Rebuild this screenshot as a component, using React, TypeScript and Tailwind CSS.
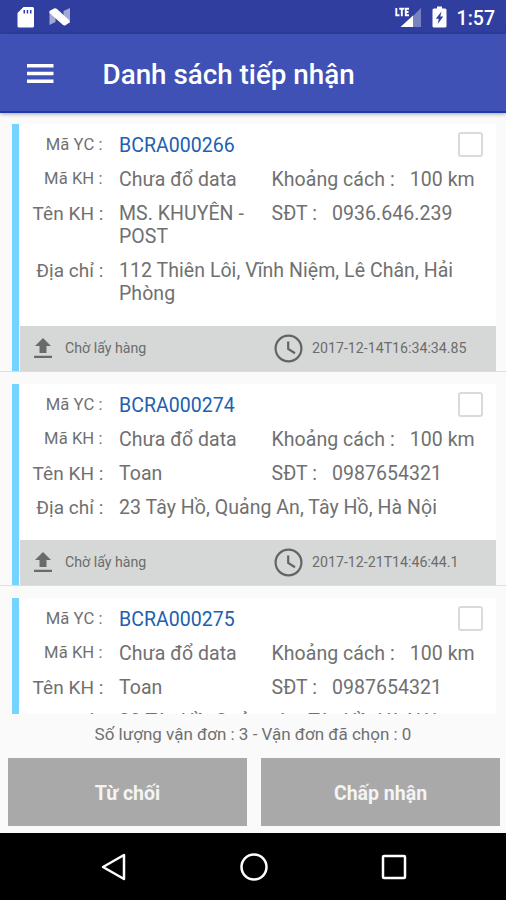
import type { ReactNode } from "react";

const orders = [
  {
    id: "BCRA000266",
    name: "MS. KHUYÊN - POST",
    phone: "0936.646.239",
    address: "112 Thiên Lôi, Vĩnh Niệm, Lê Chân, Hải Phòng",
    time: "2017-12-14T16:34:34.85",
  },
  {
    id: "BCRA000274",
    name: "Toan",
    phone: "0987654321",
    address: "23 Tây Hồ, Quảng An, Tây Hồ, Hà Nội",
    time: "2017-12-21T14:46:44.1",
  },
  {
    id: "BCRA000275",
    name: "Toan",
    phone: "0987654321",
    address: "23 Tây Hồ, Quảng An, Tây Hồ, Hà Nội",
    time: "2017-12-21T14:47:10.2",
  },
];

type Order = (typeof orders)[number];

function StatusBar() {
  return (
    <div className="flex h-[34px] shrink-0 items-center bg-[#303f9f] pr-[11px] pl-[17px] text-white">
      <svg width="18" height="21" viewBox="0 0 18 21">
        <path
          fillRule="evenodd"
          fill="currentColor"
          d="M6.5 0H15.5Q17 0 17 1.5V19Q17 20.5 15.5 20.5H2Q.5 20.5 .5 19V6ZM6.5 3V6.5H8V3ZM9.7 3V6.5H11.2V3ZM13 3V6.5H14.5V3Z"
        />
      </svg>
      <svg className="ml-[14px]" width="22" height="18" viewBox="0 0 22 18">
        <path fill="#fff" opacity=".55" d="M.5 3H6.500V14L.5 17ZM14.500 3 21 0V15H14.500Z" />
        <path fill="#fff" d="M.5 3 5 .5Q6.500 0 8 1L20.500 12.500V14.500L16.500 17.200Q15 17.700 14 17L.5 5Z" />
      </svg>
      <div className="flex-1" />
      <svg width="27" height="21" viewBox="0 0 27 21">
        <path fill="#fff" opacity=".35" d="M26 1V20H18V9Z" />
        <path fill="#fff" d="M5.500 20 18 8.500V20Z" />
        <path
          fill="none"
          stroke="#fff"
          strokeWidth="1.900"
          d="M1.300 1V8.300H4.500M4.200 1.700H9.300M6.800 1.500V9.200M14 1.700H10.800V8.300H14M10.800 5H13.500"
        />
      </svg>
      <svg className="ml-[10px]" width="15" height="22" viewBox="0 0 15 22">
        <path
          fillRule="evenodd"
          fill="#fff"
          d="M5 .5H10V2.500H13Q14.500 2.500 14.500 4V20Q14.500 21.500 13 21.500H2Q.5 21.500 .5 20V4Q.5 2.500 2 2.500H5ZM9.500 5.500 3.800 12.700H6.800L5.700 18 11.300 10.500H8.300Z"
        />
      </svg>
      <span className="ml-[10px] pt-[3px] text-[19.5px] leading-none font-medium">1:57</span>
    </div>
  );
}

function AppBar() {
  return (
    <header className="z-10 flex h-[79px] shrink-0 items-center border-b-2 border-[#1e3aa8] bg-[#3f51b5] pt-0.5 pl-[27px] text-white shadow-[0_1px_4px_rgba(0,0,0,0.35)]">
      <svg width="27" height="22" viewBox="0 0 27 22" fill="currentColor">
        <path d="M0 1H26.500V4.500H0ZM0 8.700H26.500V12.200H0ZM0 16.400H26.500V19.900H0Z" />
      </svg>
      <h1 className="ml-[48.500px] pt-0.5 text-[27.8px] leading-none font-medium">Danh sách tiếp nhận</h1>
    </header>
  );
}

function Row({ label, small, children }: { label: string; small?: boolean; children: ReactNode }) {
  return (
    <div className="flex">
      <div
        className={
          small
            ? "w-[84px] shrink-0 pr-px text-right text-[16.6px] leading-[21px]"
            : "w-[84px] shrink-0 text-right text-[19px]"
        }
      >
        {label} :
      </div>
      <div className="ml-[15.500px] flex flex-1">{children}</div>
    </div>
  );
}

function OrderCard({ order }: { order: Order }) {
  return (
    <div className="mb-3 shrink-0 border-b border-[#dedede] pr-[10px] pl-[11.500px]">
      <article className="border-l-[7px] border-[#75d3ff] bg-white text-[19.5px] leading-[23px] tracking-[0.05px] text-[#707070]">
        <div className="flex flex-col gap-[11px] pt-[10px] pb-[21px] pl-px">
          <Row label="Mã YC" small>
            <span className="flex-1 text-[#2060b0]">{order.id}</span>
            <span className="-mt-[2.500px] mr-[13px] size-[25px] rounded-[3px] border-2 border-[#dadada]" />
          </Row>
          <Row label="Mã KH" small>
            <span className="w-[152.500px]">Chưa đổ data</span>
            <span>Khoảng cách :</span>
            <span className="ml-[15px]">100 km</span>
          </Row>
          <Row label="Tên KH">
            <span className="w-[152.500px] pr-3">{order.name}</span>
            <span>SĐT :</span>
            <span className="ml-[15px]">{order.phone}</span>
          </Row>
          <Row label="Địa chỉ">
            <span className="pr-5">{order.address}</span>
          </Row>
        </div>
        <footer className="ml-[1.500px] flex h-[45px] items-center bg-[#d6d8d7] pl-[14px] text-[14.2px] tracking-normal text-[#6c6c6c]">
          <svg width="18" height="21" viewBox="0 0 18 21" fill="#6a6a6a">
            <path d="M9 0 17 8H12.500V15H5.500V8H1ZM0 17.800H18V20H0Z" />
          </svg>
          <span className="ml-[13px] w-[209px]">Chờ lấy hàng</span>
          <svg width="29" height="29" viewBox="0 0 29 29" fill="none" stroke="#646464" strokeWidth="2.200">
            <circle cx="14.500" cy="14.500" r="12.900" />
            <path d="M14.200 7.500V15L21 19.300" />
          </svg>
          <span className="ml-[9px]">{order.time}</span>
        </footer>
      </article>
    </div>
  );
}

export default function App() {
  return (
    <div className="flex h-[900px] w-[506px] flex-col overflow-hidden bg-[#fafafa] font-[Roboto,sans-serif]">
      <StatusBar />
      <AppBar />
      <main className="flex h-[601px] shrink-0 flex-col overflow-hidden pt-[11px]">
        {orders.map((order) => (
          <OrderCard key={order.id} order={order} />
        ))}
      </main>
      <p className="h-[44px] shrink-0 pt-[9px] text-center text-[17px] leading-[23px] text-[#707070]">
        Số lượng vận đơn : 3 - Vận đơn đã chọn : 0
      </p>
      <div className="flex h-[75px] shrink-0 gap-[14px] pr-[6px] pb-[7px] pl-[8px] text-[19.5px] font-bold text-[#f4f4f4]">
        <button className="flex-1 bg-[#a9a9a9] pt-1">Từ chối</button>
        <button className="flex-1 bg-[#a9a9a9] pt-1">Chấp nhận</button>
      </div>
      <nav className="flex flex-1 items-center justify-center gap-[112px] bg-black pl-0.5">
        <svg width="28" height="28" viewBox="0 0 28 28" fill="none" stroke="#fff" strokeWidth="2.500" strokeLinejoin="round">
          <path d="M24 2V26L3 14Z" />
        </svg>
        <svg width="28" height="28" viewBox="0 0 28 28" fill="none" stroke="#fff" strokeWidth="2.500">
          <circle cx="14" cy="14" r="12.500" />
        </svg>
        <svg width="28" height="28" viewBox="0 0 28 28" fill="none" stroke="#fff" strokeWidth="2.500">
          <rect x="3" y="3" width="22" height="22" rx="1" />
        </svg>
      </nav>
    </div>
  );
}
